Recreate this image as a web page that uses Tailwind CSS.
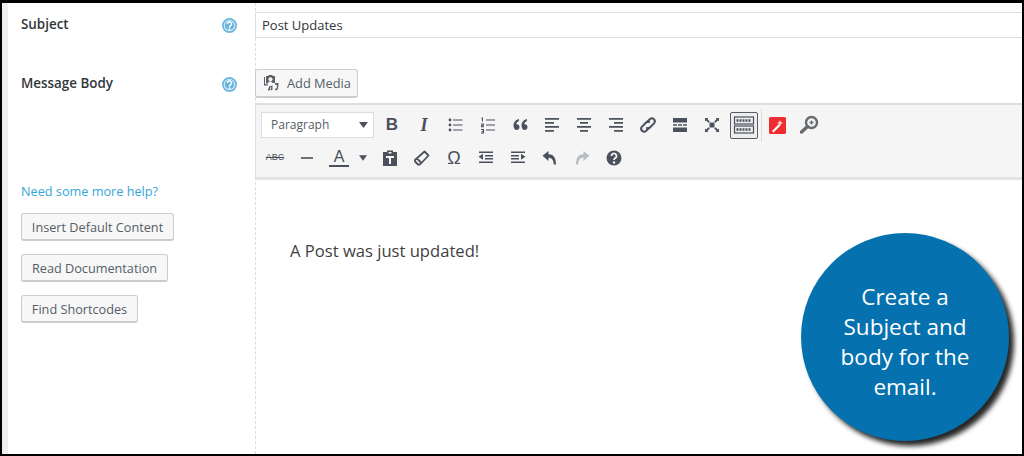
<!DOCTYPE html>
<html lang="en">
<head>
  <meta charset="UTF-8">
  <title>Message Body</title>
  <script src="https://cdn.jsdelivr.net/npm/@tailwindcss/browser@4"></script>
</head>
<body class="font-['Open_Sans',sans-serif] antialiased">
  <div class="relative w-[1024px] h-[456px] overflow-hidden bg-[#f1f1f1] border-t-[3px] border-l-[2px] border-r-[2px] border-b-[2px] border-black flex">
    <div class="w-[6px] shrink-0 bg-[#eeeeee]"></div>
    <div class="flex-1 flex bg-white min-w-0">
      <!-- labels column -->
      <div class="w-[248px] shrink-0 pl-[13px] border-r border-dashed border-[#dddddd] -mr-px">
        <div class="mt-[9px] h-[26px] flex items-center justify-between pr-[18px]">
          <span class="text-[13.4px] font-semibold text-[#32373c] -mt-[2px]">Subject</span>
          <svg class="w-[15px] h-[15px]" viewBox="0 0 16 16"><circle cx="8" cy="8" r="8" fill="#6bb5dd"/><circle cx="8" cy="8" r="5.6" fill="none" stroke="#d6edf8" stroke-width="1.2"/><path d="M5.8 6.400a2.200 2.200 0 1 1 3.400 1.800c-.8.5-1.200.9-1.200 1.800" fill="none" stroke="#fff" stroke-width="1.6"/><circle cx="8" cy="12" r="1" fill="#fff"/></svg>
        </div>
        <div class="mt-[33px] h-[26px] flex items-center justify-between pr-[18px]">
          <span class="text-[13.4px] font-semibold text-[#32373c] -mt-[2px]">Message Body</span>
          <svg class="w-[15px] h-[15px]" viewBox="0 0 16 16"><circle cx="8" cy="8" r="8" fill="#6bb5dd"/><circle cx="8" cy="8" r="5.6" fill="none" stroke="#d6edf8" stroke-width="1.2"/><path d="M5.8 6.400a2.200 2.200 0 1 1 3.400 1.800c-.8.5-1.200.9-1.200 1.800" fill="none" stroke="#fff" stroke-width="1.6"/><circle cx="8" cy="12" r="1" fill="#fff"/></svg>
        </div>
        <p class="mt-[84px] h-[20px] leading-[20px] text-[12.7px] text-[#35a6d6]">Need some more help?</p>
        <div class="mt-[12px] flex flex-col items-start gap-[13px]">
          <button class="h-[28px] w-[153px] pt-[3px] rounded-[3px] border border-[#cccccc] border-b-[2px] bg-[#f7f7f7] text-[12.7px] text-[#555d66]">Insert Default Content</button>
          <button class="h-[28px] w-[147px] pt-[3px] rounded-[3px] border border-[#cccccc] border-b-[2px] bg-[#f7f7f7] text-[12.7px] text-[#555d66]">Read Documentation</button>
          <button class="h-[28px] w-[117px] pt-[3px] rounded-[3px] border border-[#cccccc] border-b-[2px] bg-[#f7f7f7] text-[12.7px] text-[#555d66]">Find Shortcodes</button>
        </div>
      </div>
      <!-- editor column -->
      <div class="flex-1 min-w-0 pt-[9px]">
        <div class="h-[26px] border border-[#dddddd] border-r-0 pl-[6px] pt-[2px] flex items-center text-[13px] text-[#32373c]">Post Updates</div>
        <button class="mt-[31px] h-[29px] w-[103px] rounded-[3px] border border-[#cccccc] border-b-[2px] bg-[#f7f7f7] flex items-center pl-[7px] pt-[1px] gap-[6px] text-[12.8px] text-[#555d66]">
          <svg class="w-[18px] h-[18px] shrink-0 -mt-[1px]" viewBox="0 0 18 18" fill="#5b6068"><path d="M3 2h2l1-1h3l1 1h2v7H9.600A3 3 0 0 0 6 7.500 3 3 0 0 0 5 9.500H3zM2 3v7l3 .5v1H1V3z" fill-rule="evenodd"/><circle cx="7.500" cy="5.200" r="2" fill="#f7f7f7"/><path d="M12 9h3.500v1.500L15 15l-1.800 1.500L11.500 15l2.300-.7V10.700H12zM6 12.500l3.500-.9v4.200l-1.700.6-.5-1.700.9-.3v-1.200l-1.200.3v2.600l-1.700.6-.5-1.600.7-.3z"/></svg>
          <span class="pt-[1px]">Add Media</span>
        </button>
        <div class="mt-[5px] h-[77px] bg-[#f5f5f5] border-t-[2px] border-l border-[#dedede] border-b-[3px] border-b-[#e3e3e3] text-[#4a505c]">
          <div class="flex items-center h-[32px] mt-[4px] pl-[5px]">
            <div class="w-[113px] h-[26px] shrink-0 bg-white border border-[#dddddd] flex items-center justify-between pl-[9px] pr-[5px] text-[12px] text-[#555d66]">
              <span>Paragraph</span>
              <svg class="w-[9px] h-[6px]" viewBox="0 0 9 6"><path d="M0 0h9L4.500 6z" fill="#4a505c"/></svg>
            </div>
            <div class="w-[2px] shrink-0"></div>
            <span class="w-8 text-center text-[17px] font-bold font-['Liberation_Sans',sans-serif]">B</span>
            <span class="w-8 text-center text-[18px] font-bold italic font-['Liberation_Serif',serif]">I</span>
            <div class="w-8 flex justify-center"><svg class="w-5 h-5" viewBox="0 0 20 20" fill="currentColor"><circle cx="4" cy="5" r="1.400"/><circle cx="4" cy="10" r="1.400"/><circle cx="4" cy="15" r="1.400"/><path d="M7 4.400h9.500v1.200H7zM7 9.400h9.500v1.200H7zM7 14.400h9.500v1.200H7z"/></svg></div>
            <div class="w-8 flex justify-center"><svg class="w-5 h-5" viewBox="0 0 20 20" fill="currentColor"><path d="M3.500 2.500h1.500v4H3.900V3.500h-.4zM3 8.500h3v2.200H4.200v.6H6v1H3v-2.200h1.800v-.6H3zM3 14h3v4.500H3v-1h1.800V16.700H3.600v-.8h1.200v-.9H3zM8 4.400h9v1.200H8zM8 9.400h9v1.200H8zM8 14.400h9v1.200H8z"/></svg></div>
            <div class="w-8 flex justify-center"><svg class="w-5 h-5" viewBox="0 0 20 20" fill="currentColor"><path d="M9 4c-2.500.6-5.500 2.800-5.500 6.500 0 2.500 1.300 4.500 3.200 4.500 1.600 0 2.800-1.200 2.800-2.900 0-1.600-1.100-2.800-2.600-2.800-.3 0-.6 0-.8.1C6.500 8 7.600 6.700 9 6.100zM17 4c-2.500.6-5.500 2.800-5.500 6.500 0 2.500 1.300 4.500 3.200 4.500 1.600 0 2.800-1.200 2.800-2.900 0-1.600-1.100-2.800-2.600-2.800-.3 0-.6 0-.8.1.4-1.400 1.500-2.700 2.900-3.300z"/></svg></div>
            <div class="w-8 flex justify-center"><svg class="w-5 h-5" viewBox="0 0 20 20" fill="currentColor"><path d="M3 4h14v1.800H3zM3 8h9v1.800H3zM3 12h14v1.800H3zM3 16h9v1.800H3z" transform="translate(0 -1)"/></svg></div>
            <div class="w-8 flex justify-center"><svg class="w-5 h-5" viewBox="0 0 20 20" fill="currentColor"><path d="M3 4h14v1.800H3zM6 8h8v1.800H6zM3 12h14v1.800H3zM6 16h8v1.800H6z" transform="translate(0 -1)"/></svg></div>
            <div class="w-8 flex justify-center"><svg class="w-5 h-5" viewBox="0 0 20 20" fill="currentColor"><path d="M3 4h14v1.800H3zM8 8h9v1.800H8zM3 12h14v1.800H3zM8 16h9v1.800H8z" transform="translate(0 -1)"/></svg></div>
            <div class="w-8 flex justify-center"><svg class="w-5 h-5" viewBox="0 0 20 20" fill="none" stroke="currentColor" stroke-width="2"><path d="M8.500 7.500l3.500-3.500a3 3 0 0 1 4.200 4.200l-4 4a3 3 0 0 1-4 .3"/><path d="M11.500 12.500l-3.500 3.500a3 3 0 0 1-4.200-4.200l4-4a3 3 0 0 1 4-.3"/></svg></div>
            <div class="w-8 flex justify-center"><svg class="w-5 h-5" viewBox="0 0 20 20" fill="currentColor"><path d="M3 3h14v4.500H3zM3 9.300h4v1.400H3zM8 9.300h4v1.400H8zM13 9.300h4v1.400h-4zM3 12.500h14V17H3z"/></svg></div>
            <div class="w-8 flex justify-center"><svg class="w-5 h-5" viewBox="0 0 20 20" fill="currentColor"><path d="M7.500 7.500h5v5h-5zM3 3l3.500 0-1.100 1.100L7.800 6.500 6.500 7.800 4.100 5.400 3 6.500zM17 3v3.500l-1.100-1.100-2.400 2.400-1.300-1.300 2.400-2.400L13.500 3zM3 17v-3.500l1.100 1.100 2.400-2.400 1.300 1.300-2.400 2.400L6.500 17zM17 17h-3.500l1.100-1.100-2.400-2.400 1.300-1.300 2.400 2.400 1.100-1.100z"/></svg></div>
            <div class="w-[28px] h-[27px] ml-[2px] shrink-0 rounded-[2px] border border-[#555d66] bg-[#eeeeee] flex justify-center items-center"><svg class="w-[22px] h-[20px]" viewBox="0 0 22 20" fill="none" stroke="currentColor"><rect x="1.500" y="2" width="19" height="7" stroke-width="1.200"/><rect x="1.500" y="11" width="19" height="7" stroke-width="1.200"/><path d="M3.500 5.500h15M3.500 14.500h15" stroke-width="2.400" stroke-dasharray="2 1"/></svg></div>
            <div class="w-px h-[33px] bg-[#dddddd] ml-[3px] shrink-0"></div>
            <div class="w-[31px] flex justify-center"><svg class="w-[17px] h-[17px]" viewBox="0 0 17 17"><rect width="17" height="17" rx="1.500" fill="#ee2d30"/><path d="M3 14L10 7l1.500 1.500-7 7z" fill="#fff"/><path d="M11 3l1 2 2 1-2 1-1 2-1-2-2-1 2-1z" fill="#fbd3c9"/></svg></div>
            <div class="w-8 flex justify-center"><svg class="w-5 h-5" viewBox="0 0 20 20"><circle cx="12.500" cy="7.500" r="5.500" fill="none" stroke="#666b70" stroke-width="2.400"/><path d="M8.500 11.500L2.500 17" stroke="#666b70" stroke-width="3.400" stroke-linecap="round"/><path d="M10.500 6.800h4v1.400h-4zM11.800 5.500h1.400v4h-1.400z" fill="#666b70"/></svg></div>
          </div>
          <div class="flex items-center h-[32px] mt-[1px] pl-[3px]">
            <span class="w-8 text-center text-[9px] line-through font-['Liberation_Sans',sans-serif]">ABC</span>
            <div class="w-8 flex justify-center"><svg class="w-5 h-5" viewBox="0 0 20 20" fill="currentColor"><path d="M4 9.200h12v1.600H4z"/></svg></div>
            <div class="w-8 flex flex-col items-center leading-none"><span class="text-[16px] font-['Liberation_Sans',sans-serif]">A</span><span class="w-5 h-[2px] bg-[#4a505c]"></span></div>
            <div class="w-[15px] flex justify-center"><svg class="w-[8px] h-[6px]" viewBox="0 0 9 6"><path d="M0 0h9L4.500 6z" fill="#4a505c"/></svg></div>
            <div class="w-[4px]"></div>
            <div class="w-8 flex justify-center"><svg class="w-5 h-5" viewBox="0 0 20 20" fill="currentColor"><path d="M3 4h4V2.500h6V4h4v14H3zM8.500 4v1.500h3V4zM6 8v2h3v6h2v-6h3V8z" fill-rule="evenodd"/></svg></div>
            <div class="w-8 flex justify-center"><svg class="w-5 h-5" viewBox="0 0 20 20" fill="none" stroke="currentColor" stroke-width="1.800"><path d="M12.500 3.500l4 4-8.500 9H6l-3-3v-1.500zM5 10.500l5 5" stroke-linejoin="round"/></svg></div>
            <span class="w-8 text-center text-[18px] font-['Liberation_Sans',sans-serif]">Ω</span>
            <div class="w-8 flex justify-center"><svg class="w-5 h-5" viewBox="0 0 20 20" fill="currentColor"><path d="M3 3.500h14V5H3zM9 7h8v1.500H9zM9 10h8v1.500H9zM3 13.500h14V15H3zM7 5.800v6L2.500 8.800z"/></svg></div>
            <div class="w-8 flex justify-center"><svg class="w-5 h-5" viewBox="0 0 20 20" fill="currentColor"><path d="M3 3.500h14V5H3zM3 7h8v1.500H3zM3 10h8v1.500H3zM3 13.500h14V15H3zM13 5.800v6l4.500-3z"/></svg></div>
            <div class="w-8 flex justify-center"><svg class="w-5 h-5" viewBox="0 0 20 20" fill="currentColor"><path d="M8.500 3v3.200c4.700 0 7.500 3 7.500 10.300h-2.200c-.2-4.600-1.800-6.800-5.300-6.800v3.300L2.500 7.800z"/></svg></div>
            <div class="w-8 flex justify-center"><svg class="w-5 h-5" viewBox="0 0 20 20" fill="#b8bec2"><path d="M11.500 3v3.200C6.800 6.200 4 9.200 4 16.500h2.200c.2-4.600 1.800-6.800 5.300-6.800v3.300l6-5.200z"/></svg></div>
            <div class="w-8 flex justify-center"><svg class="w-5 h-5" viewBox="0 0 20 20"><circle cx="10" cy="10" r="7.500" fill="currentColor"/><path d="M7.500 8a2.500 2.500 0 1 1 3.800 2.100c-.9.600-1.300 1-1.300 2" fill="none" stroke="#f5f5f5" stroke-width="1.800"/><circle cx="10" cy="14.500" r="1.200" fill="#f5f5f5"/></svg></div>
          </div>
        </div>
        <p class="mt-[60px] pl-[35px] text-[16.6px] leading-[22px] text-[#3f3f3f]">A Post was just updated!</p>
      </div>
    </div>
    <!-- callout -->
    <div class="absolute left-[799px] top-[230px] w-[208px] h-[208px] rounded-full bg-[#0571ae] shadow-[5px_5px_5px_rgba(0,0,0,0.85)] flex items-center justify-center text-center text-white text-[22.5px] leading-[30px]">
      <p class="w-[150px] mt-[10px]">Create a Subject and body for the email.</p>
    </div>
  </div>
</body>
</html>
